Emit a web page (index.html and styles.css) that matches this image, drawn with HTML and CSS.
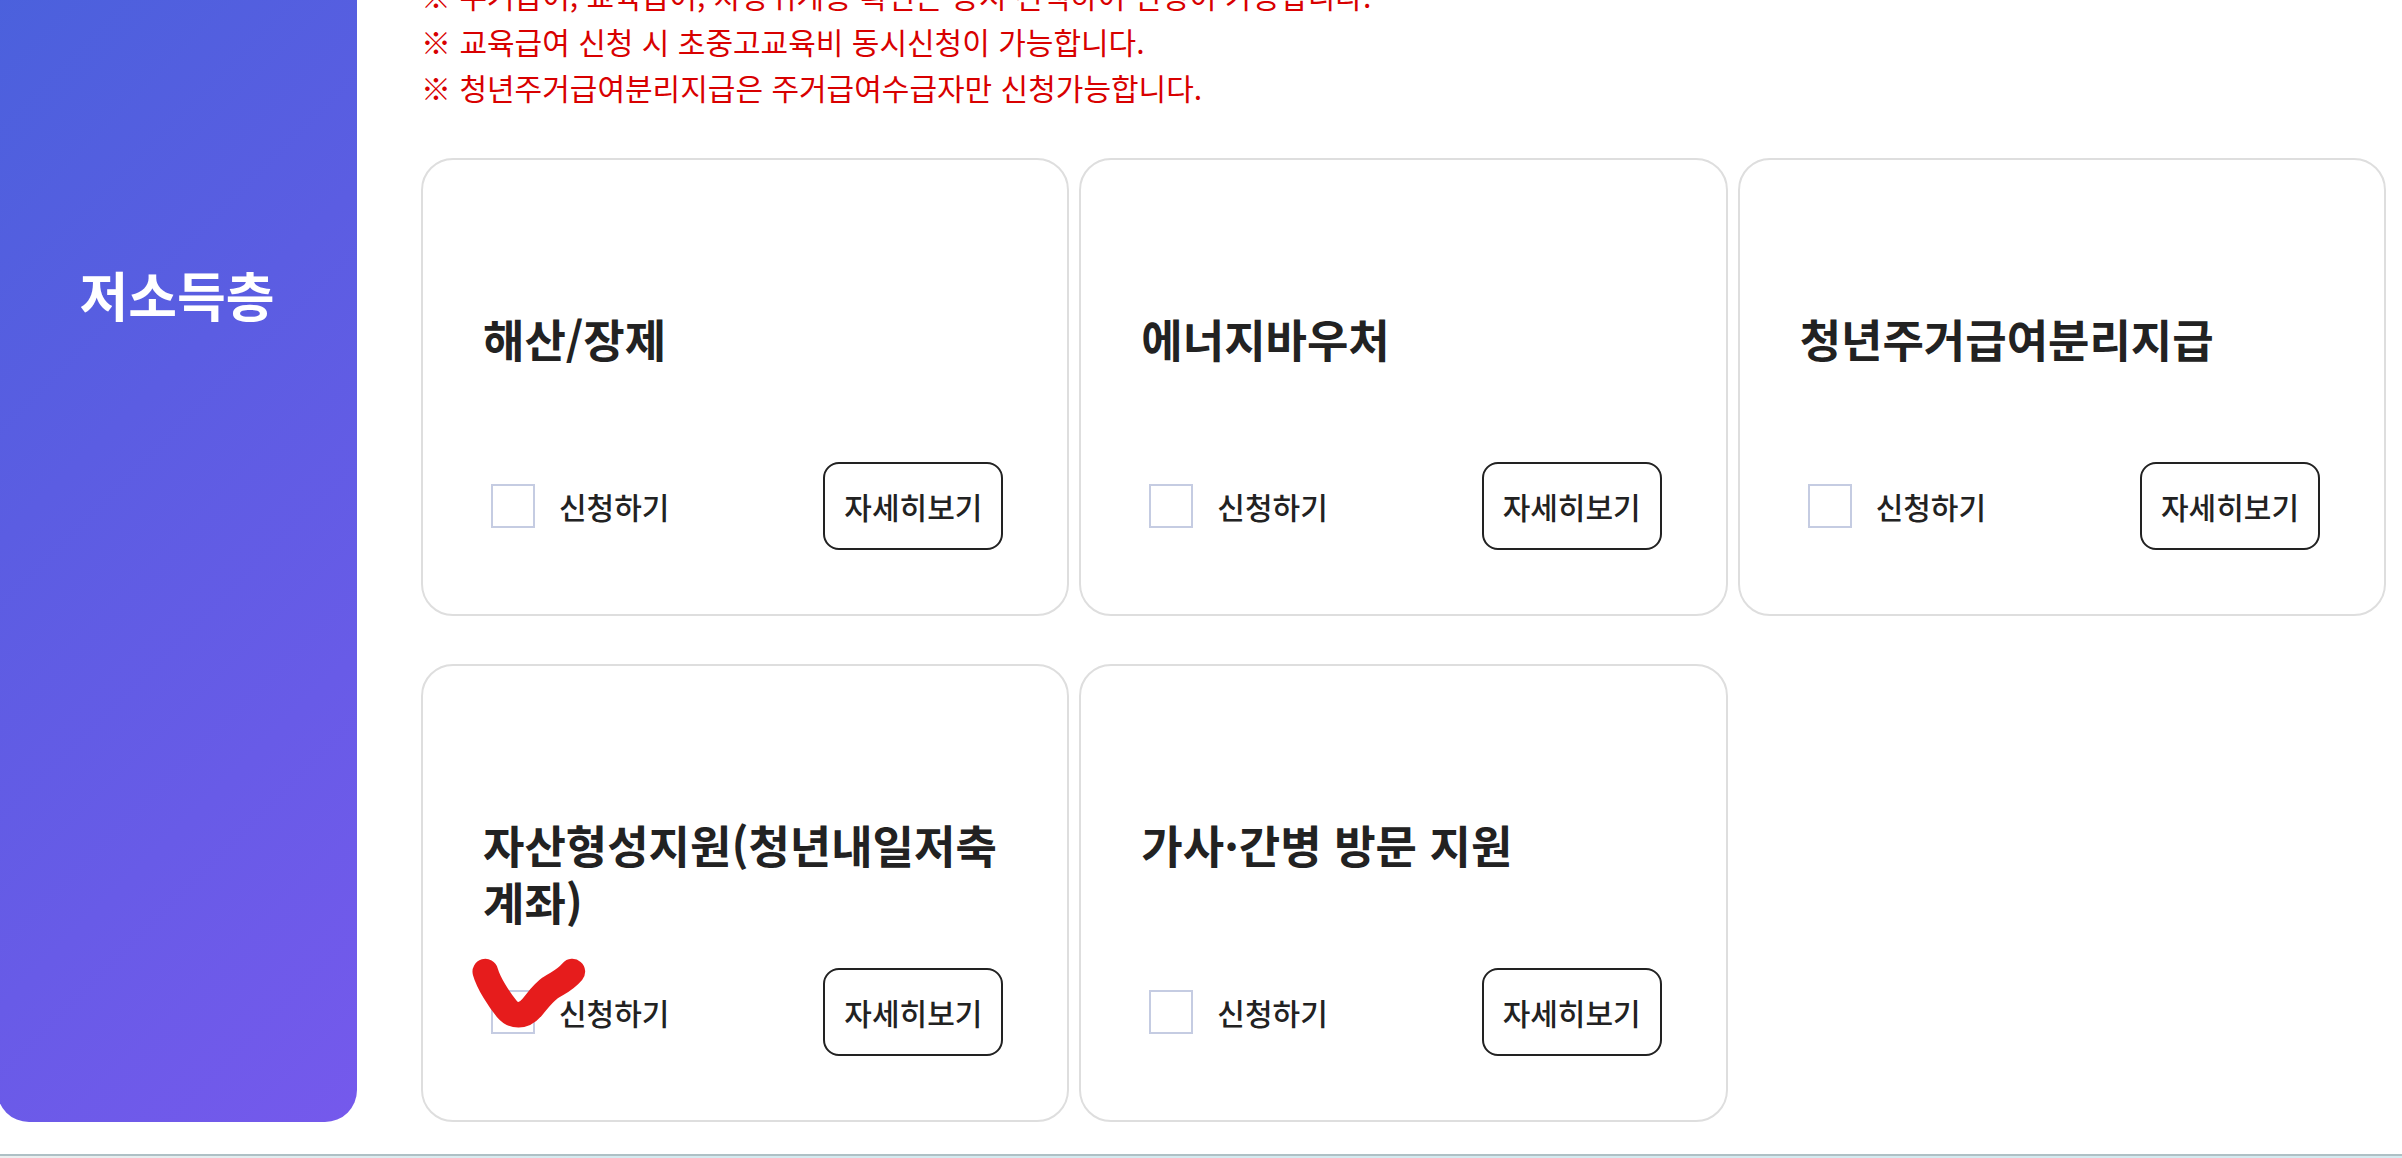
FILE: index.html
```html
<!DOCTYPE html>
<html lang="ko">
<head>
<meta charset="utf-8">
<meta name="viewport" content="width=device-width, initial-scale=1">
<title>저소득층 복지서비스 신청</title>
<link rel="stylesheet" href="styles.css">
</head>
<body>
<main class="group">
  <header class="group__side">
    <h2 class="group__name">저소득층</h2>
  </header>
  <section class="group__body">
    <ul class="notes">
      <li>※ 주거급여, 교육급여, 차상위계층 확인은 동시 선택하여 신청이 가능합니다.</li>
      <li>※ 교육급여 신청 시 초중고교육비 동시신청이 가능합니다.</li>
      <li>※ 청년주거급여분리지급은 주거급여수급자만 신청가능합니다.</li>
    </ul>
    <div class="cards">
      <article class="card">
        <h3 class="card__title">해산/장제</h3>
        <div class="card__actions">
          <label class="apply"><input class="apply__box" type="checkbox">신청하기</label>
          <button class="detail" type="button">자세히보기</button>
        </div>
      </article>
      <article class="card">
        <h3 class="card__title">에너지바우처</h3>
        <div class="card__actions">
          <label class="apply"><input class="apply__box" type="checkbox">신청하기</label>
          <button class="detail" type="button">자세히보기</button>
        </div>
      </article>
      <article class="card">
        <h3 class="card__title">청년주거급여분리지급</h3>
        <div class="card__actions">
          <label class="apply"><input class="apply__box" type="checkbox">신청하기</label>
          <button class="detail" type="button">자세히보기</button>
        </div>
      </article>
      <article class="card">
        <h3 class="card__title">자산형성지원(청년내일저축계좌)</h3>
        <div class="card__actions">
          <label class="apply"><input class="apply__box" type="checkbox">신청하기</label>
          <button class="detail" type="button">자세히보기</button>
          <svg class="mark" viewBox="0 0 420 330" aria-hidden="true">
            <path d="M76 95C86 130 118 180 140 206C160 230 190 232 216 202C236 178 248 160 270 144C298 126 314 122 337 95"/>
          </svg>
        </div>
      </article>
      <article class="card">
        <h3 class="card__title">가사·간병 방문 지원</h3>
        <div class="card__actions">
          <label class="apply"><input class="apply__box" type="checkbox">신청하기</label>
          <button class="detail" type="button">자세히보기</button>
        </div>
      </article>
    </div>
  </section>
</main>
<footer class="next"></footer>
</body>
</html>
```

FILE: styles.css
```css
* {
  box-sizing: border-box;
}

html {
  overflow: hidden;
}

body {
  margin: 0;
  background: #fff;
  color: #222;
  font-family: "Noto Sans CJK KR", sans-serif;
  font-size: 30px;
  line-height: 46px;
}

.group {
  display: flex;
  gap: 64px;
  margin: -28px 0 32px -3px;
  padding-right: 16px;
}

.group__side {
  display: flex;
  flex: 0 0 360px;
  justify-content: center;
  padding-top: 282px;
  border-radius: 0 0 32px 32px;
  background: linear-gradient(135deg, #4a61dc, #5b5de2 38%, #7559ec);
}

.group__name {
  margin: 0;
  color: #fff;
  font-size: 53px;
  font-weight: 700;
  line-height: 80px;
}

.group__body {
  flex: 1;
  min-width: 0;
}

.notes {
  margin: 0 0 48px;
  padding: 0;
  list-style: none;
  color: #d80000;
}

.cards {
  display: grid;
  grid-template-columns: repeat(3, 1fr);
  gap: 48px 10px;
}

.card {
  padding: 150px 64px 64px 60px;
  border: 2px solid #dedede;
  border-radius: 32px;
}

.card__title {
  min-height: 152px;
  margin: 0;
  font-size: 45px;
  font-weight: 700;
  line-height: 57px;
}

.card__actions {
  position: relative;
  display: flex;
  align-items: center;
  justify-content: space-between;
}

.apply {
  display: flex;
  align-items: center;
  gap: 24px;
  padding-left: 8px;
  font-weight: 500;
}

.apply__box {
  width: 44px;
  height: 44px;
  margin: 0;
  appearance: none;
  border: 2px solid #c5cce2;
  background: #fff;
}

.detail {
  width: 180px;
  height: 88px;
  padding: 0;
  border: 2px solid #222;
  border-radius: 16px;
  background: #fff;
  color: inherit;
  font: inherit;
  font-weight: 500;
}

.mark {
  position: absolute;
  top: -28px;
  left: -23px;
  width: 140px;
  height: 110px;
  fill: none;
  stroke: #e61c1c;
  stroke-width: 77;
  stroke-linecap: round;
  stroke-linejoin: round;
  pointer-events: none;
}

.next {
  height: 32px;
  border-top: 2px solid #aec0c5;
  background: linear-gradient(90deg, #ecf0f0, #d5ebf0 25%);
}
```
